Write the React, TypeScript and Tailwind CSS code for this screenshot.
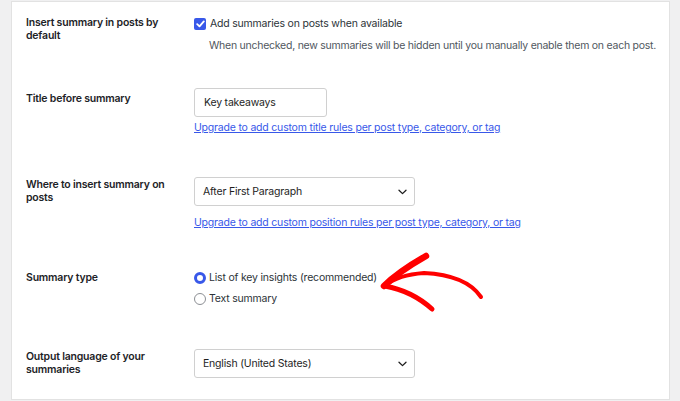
import React from "react";

const font = { fontFamily: "Inter, 'Noto Sans', sans-serif", letterSpacing: "-0.2px" };

function Chevron() {
  return (
    <svg width="9" height="6" viewBox="0 0 9 6" fill="none">
      <path d="M1 1.2 L4.5 4.6 L8 1.2" stroke="#1e1e1e" strokeWidth="1.3" strokeLinecap="round" strokeLinejoin="round" />
    </svg>
  );
}

function Select({ value }: { value: string }) {
  return (
    <div className="flex h-[29px] w-[221px] items-center justify-between rounded-[3px] border border-[#d0d0d0] bg-white pl-[8px] pr-[7px] text-[10.5px] leading-[13px] text-[#1e1e1e]">
      <span>{value}</span>
      <Chevron />
    </div>
  );
}

const label = "w-[168px] shrink-0 text-[10.5px] font-semibold leading-[13px] text-[#1d2327]";

export default function App() {
  return (
    <div className="relative h-[401px] w-[680px] overflow-hidden bg-[#f0f0f1] px-[11px] pt-px" style={font}>
      <div className="h-[399px] w-[659px] border border-[#e2e2e2] bg-white pl-[14px]">
        {/* Row 1 */}
        <div className="flex h-[68px]">
          <div className={`${label} pt-[14px]`}>
            Insert summary in posts by
            <br />
            default
          </div>
          <div className="pt-[15px]">
            <div className="flex items-center gap-[4px]">
              <span className="flex h-[12px] w-[12px] items-center justify-center rounded-[2px] bg-[#3858e9]">
                <svg width="9" height="8" viewBox="0 0 9 8" fill="none">
                  <path d="M1.2 4.2 L3.5 6.4 L7.8 1.4" stroke="white" strokeWidth="1.8" strokeLinecap="round" strokeLinejoin="round" />
                </svg>
              </span>
              <span className="text-[10.5px] leading-[13px] text-[#2c3338]">Add summaries on posts when available</span>
            </div>
            <div className="mt-[9px] pl-[15px] text-[10.5px] leading-[13px] tracking-[-0.25px] text-[#50575e]">
              When unchecked, new summaries will be hidden until you manually enable them on each post.
            </div>
          </div>
        </div>
        {/* Row 2 */}
        <div className="flex h-[80px]">
          <div className={`${label} pt-[22px]`}>Title before summary</div>
          <div className="pt-[18px]">
            <div className="flex h-[29px] w-[133px] items-center rounded-[3px] border border-[#d0d0d0] bg-white pl-[9px] text-[10.5px] leading-[13px] text-[#1e1e1e]">
              Key takeaways
            </div>
            <div className="mt-[4px] text-[10.5px] leading-[13px] text-[#3858e9] underline">
              Upgrade to add custom title rules per post type, category, or tag
            </div>
          </div>
        </div>
        {/* Row 3 */}
        <div className="flex h-[100px]">
          <div className={`${label} pt-[28px]`}>
            Where to insert summary on
            <br />
            posts
          </div>
          <div className="pt-[27px]">
            <Select value="After First Paragraph" />
            <div className="mt-[10px] text-[10.5px] leading-[13px] text-[#3858e9] underline">
              Upgrade to add custom position rules per post type, category, or tag
            </div>
          </div>
        </div>
        {/* Row 4 */}
        <div className="flex h-[70px]">
          <div className={`${label} pt-[21px]`}>Summary type</div>
          <div className="flex flex-col gap-[8px] pt-[21px]">
            <div className="flex items-center gap-[3px]">
              <span className="h-[12px] w-[12px] rounded-full border-[3px] border-[#3858e9] bg-white" />
              <span className="text-[10.5px] leading-[13px] text-[#2c3338]">List of key insights (recommended)</span>
            </div>
            <div className="flex items-center gap-[3px]">
              <span className="h-[12px] w-[12px] rounded-full border border-[#8c8f94] bg-white" />
              <span className="text-[10.5px] leading-[13px] text-[#2c3338]">Text summary</span>
            </div>
          </div>
        </div>
        {/* Row 5 */}
        <div className="flex h-[79px]">
          <div className={`${label} pt-[30px]`}>
            Output language of your
            <br />
            summaries
          </div>
          <div className="pt-[29px]">
            <Select value="English (United States)" />
          </div>
        </div>
      </div>
      {/* Hand-drawn arrow annotation */}
      <svg className="absolute left-0 top-0" width="680" height="401" viewBox="0 0 680 401" fill="none">
        <path d="M384 286 Q398 272 426 256" stroke="#ff0000" strokeWidth="6.5" strokeLinecap="round" />
        <path d="M385 286 Q412 291 432 309" stroke="#ff0000" strokeWidth="5" strokeLinecap="round" />
        <path d="M386 285 Q398 275 424 273 Q466 275 481 297" stroke="#ff0000" strokeWidth="4" strokeLinecap="round" />
      </svg>
    </div>
  );
}
